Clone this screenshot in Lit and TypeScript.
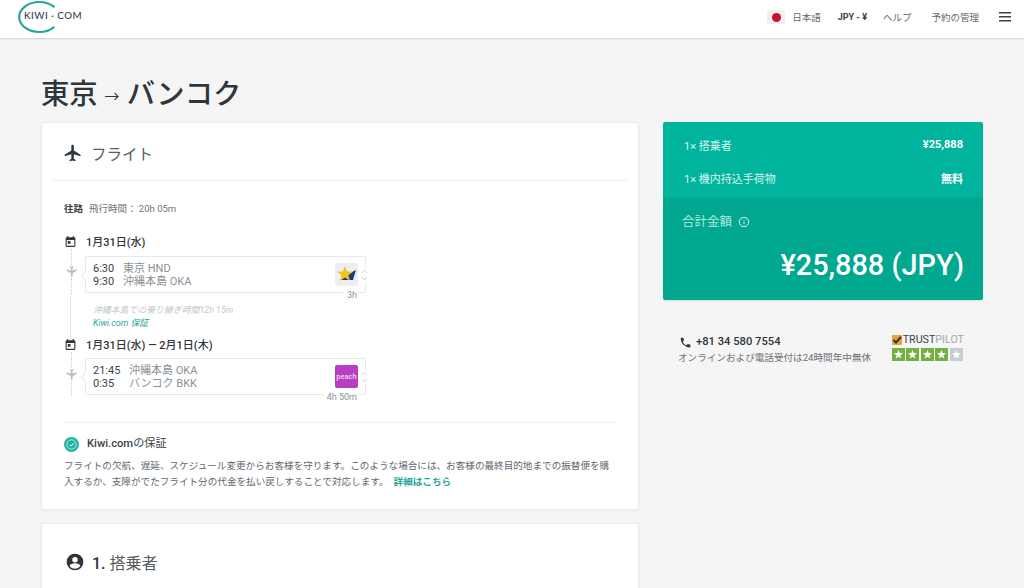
import { LitElement, html, css, svg } from "lit";
import { customElement } from "lit/decorators.js";

const plane = "M21 16v-2l-8-5V3.5c0-.83-.67-1.5-1.5-1.5S10 2.67 10 3.5V9l-8 5v2l8-2.5V19l-2 1.5V22l3.5-1 3.5 1v-1.5L13 19v-5.5l8 2.5z";
const cal = "M19 4h-1V2h-2v2H8V2H6v2H5a2 2 0 0 0-2 2v14a2 2 0 0 0 2 2h14a2 2 0 0 0 2-2V6a2 2 0 0 0-2-2zm0 16H5V9h14v11zM7 11h5v5H7z";

const starPath = "M6.5 2l1.2 3.1 3.3.2-2.6 2.1.9 3.2-2.8-1.8-2.8 1.8.9-3.2L2 5.3l3.3-.2z";

@customElement("app-root")
export class AppRoot extends LitElement {
  static styles = css`
    :host { display: block; width: 1024px; height: 588px; overflow: hidden; background: #f5f5f5; color: #2e353b;
      font-family: Roboto, "Noto Sans CJK JP", sans-serif; }
    * { box-sizing: border-box; }
    svg { display: block; flex: none; }
    header { height: 38px; background: #fff; box-shadow: 0 1px 2px rgba(0,0,0,.14); display: flex; align-items: center; padding: 0 13px 4px 18px; }
    .logo { position: relative; width: 65px; height: 34px; }
    .logo-text { position: absolute; left: 6px; top: 8px; font: 500 9.8px/14px Lato, sans-serif; letter-spacing: .5px; white-space: nowrap; color: #3b4349; }
    nav { margin-left: auto; display: flex; align-items: center; font-size: 9.5px; color: #5f676d; }
    .flag { width: 18px; height: 14px; background: #f5eef0; display: flex; align-items: center; justify-content: center; margin-right: 7px; }
    .flag i { width: 9px; height: 9px; border-radius: 50%; background: #c8102e; display: block; }
    .cur { font-weight: 700; color: #3b4349; margin-left: 17px; font-size: 9px; }
    .help { margin-left: 16px; }
    .manage { margin-left: 20px; }
    .menu { margin-left: 20px; }
    main { padding: 0 41px; }
    h1 { margin: 0; height: 84px; padding-top: 29px; font-size: 28.3px; line-height: 34px; font-weight: 500; color: #2e353b; display: flex; align-items: center; white-space: nowrap; }
    h1 span { font-size: 15px; font-weight: 400; margin: 4px 7px 0 7px; }
    .grid { display: grid; grid-template-columns: 598px 320px; column-gap: 24px; align-items: start; }
    .card { background: #fff; border: 1px solid #ebeced; border-radius: 2px; box-shadow: 0 1px 2px rgba(0,0,0,.04); }
    .flights { height: 388px; padding: 0 11px; }
    .head { height: 58px; border-bottom: 1px solid #ebeced; display: flex; align-items: center; gap: 8px; padding: 2px 0 0 10px; font-size: 15.5px; color: #555c62; }
    .body { padding: 0 11px; }
    .outbound { margin-top: 21px; font-size: 9.5px; line-height: 14px; color: #6c7378; display: flex; gap: 6px; }
    .outbound b { color: #3b4349; font-weight: 700; }
    .day { display: flex; align-items: center; gap: 9px; height: 16px; font-size: 11px; font-weight: 500; color: #2e353b; }
    .first { margin-top: 17px; }
    .second { margin-top: -3px; }
    .seg { display: flex; height: 45px; }
    .seg.after { height: 44px; }
    .rail { width: 21px; flex: none; display: flex; flex-direction: column; align-items: flex-start; padding-left: 1px; }
    .dots { width: 0; margin-left: 6px; border-left: 1px dotted #c9ced2; flex: 1; }
    .box { position: relative; width: 281px; height: 37px; margin-top: 7px; border: 1px solid #e6e8ea; border-radius: 2px; background: #fff; padding: 5px 0 0 7px; font-size: 11px; line-height: 13px; color: #8b9197; }
    .after .box { margin-top: 6px; }
    .box::before { content: ""; position: absolute; left: -4px; top: 15px; width: 6px; height: 6px; background: #fff; border-left: 1px solid #e6e8ea; border-bottom: 1px solid #e6e8ea; transform: rotate(45deg); }
    .line { display: flex; white-space: nowrap; }
    .line b { font-weight: 400; color: #3b4349; }
    .t1 b { width: 30px; } .t2 b { width: 36px; }
    .carrier { position: absolute; right: 7px; top: 6px; width: 23px; height: 23px; border-radius: 2px; overflow: hidden; }
    .peach { background: #b73ec0; color: #f3d3f0; font: 500 7.5px/23px Roboto, sans-serif; text-align: center; }
    .chev { position: absolute; right: -3px; top: 11px; background: #fff; }
    .dur { position: absolute; right: 8px; top: 32px; font-size: 9px; line-height: 12px; color: #8b9197; white-space: nowrap; background: #fff; padding: 0 0 0 3px; }
    .gap { display: flex; height: 45px; }
    .gap-text { padding: 10px 0 0 29px; font-size: 8.9px; line-height: 13px; font-style: italic; white-space: nowrap; color: #c3c7cb; }
    .gap-text div + div { color: #25a899; }
    .gap .rail { width: 0; padding: 0; overflow: visible; }
    .sep { height: 1px; background: #ebeced; margin-top: 26px; }
    .g-head { display: flex; align-items: center; gap: 8px; margin-top: 13px; font-size: 11.2px; line-height: 16px; color: #3b4349; font-weight: 500; }
    .g-head span { font-weight: 400; }
    .g-text { margin: 6px 0 0; font-size: 9.6px; line-height: 16px; color: #5f676d; }
    .g-text a { color: #25a899; font-weight: 700; margin-left: 5px; }
    .pax { margin-top: 13px; width: 598px; height: 100px; padding: 0 0 0 23px; display: flex; align-items: center; align-self: start; gap: 7px; font-size: 16px; color: #555c62; }
    .pax svg, .pax div { margin-top: -22px; }
    .pax b { color: #2e353b; font-weight: 500; }
    .left { display: flex; flex-direction: column; }
    .price { border-radius: 2px; overflow: hidden; color: #fff; height: 178px; display: flex; flex-direction: column; box-shadow: 0 1px 2px rgba(0,0,0,.1); }
    .top { height: 75px; background: #00b49d; padding: 6px 20px 0 21px; }
    .row { display: flex; justify-content: space-between; align-items: center; height: 33px; font-size: 11px; color: #d9f5f0; }
    .row b { color: #fff; font-weight: 700; font-size: 11px; }
    .bottom { flex: 1; background: #00a88f; padding: 17px 19px 0 19px; }
    .total { display: flex; align-items: center; gap: 6px; font-size: 12.5px; line-height: 16px; color: #b5e7de; }
    .amount { margin-top: 17px; text-align: right; font-size: 28.9px; line-height: 36px; font-weight: 500; white-space: nowrap; }
    .contact { display: flex; justify-content: space-between; margin-top: 34px; padding: 0 19px 0 15px; }
    .phone { display: flex; align-items: center; gap: 4px; font-size: 11.2px; line-height: 16px; font-weight: 500; color: #2e353b; margin-left: 1px; }
    .note { font-size: 9.6px; line-height: 14px; color: #6c7378; margin-top: 1px; }
    .tp-word { display: flex; align-items: center; gap: 1px; font: 400 10.7px/13px Roboto, sans-serif; color: #3b4349; margin-top: -1px; }
    .tp-word span { color: #a6abaf; }
    .stars { display: flex; gap: 1.5px; margin-top: 2px; }
    .star { width: 13px; height: 13px; background: #73b143; }
    .star.off { background: #c9cccf; }
  `;

  private seg(t1: string, p1: string, t2: string, p2: string, cls: string, logo: unknown, dur: string, after = "") {
    return html`<div class="seg ${after}">
      <div class="rail">
        <div class="dots"></div>
        <svg width="13" height="13" viewBox="0 0 24 24" fill="#b4bbc1" style="transform:rotate(180deg)"><path d="${plane}"></path></svg>
        <div class="dots"></div>
      </div>
      <div class="box ${cls}">
        <div class="line"><b>${t1}</b><span>${p1}</span></div>
        <div class="line"><b>${t2}</b><span>${p2}</span></div>
        ${logo}
        <svg class="chev" width="7" height="14" viewBox="0 0 7 14" fill="none" stroke="#cfd3d6" stroke-width="1"><path d="M1 5l2.5-3L6 5M1 9l2.5 3L6 9"></path></svg>
        <div class="dur">${dur}</div>
      </div>
    </div>`;
  }

  render() {
    const sky = html`<div class="carrier" style="background:#eceef0"><svg width="23" height="23" viewBox="0 0 23 23">
      <path d="M9 13L21 7l-3 10H5z" fill="#1d3b83"></path>
      <path d="M10 3l2 5.5 6 .2-4.7 3.6 1.7 5.7-5-3.4-5 3.4 1.7-5.7L2 8.700l6-.2z" fill="#f1c31d"></path></svg></div>`;
    const peach = html`<div class="carrier peach">peach</div>`;
    const calIcon = html`<svg width="13" height="13" viewBox="0 0 24 24" fill="#2e353b"><path d="${cal}"></path></svg>`;
    return html`
      <header>
        <div class="logo">
          <svg width="40" height="34" viewBox="0 0 40 34" fill="none"><path d="M35.700 6.700A20 15 0 1 0 35.700 27.300" stroke="#25a899" stroke-width="2.200" stroke-linecap="round"></path></svg>
          <div class="logo-text">KIWI · COM</div>
        </div>
        <nav>
          <div class="flag"><i></i></div>
          <span>日本語</span>
          <span class="cur">JPY - ¥</span>
          <span class="help">ヘルプ</span>
          <span class="manage">予約の管理</span>
          <svg class="menu" width="12" height="10" viewBox="0 0 12 10" fill="#3b4349"><path d="M0 0h12v1.500H0zM0 4h12v1.500H0zM0 8h12v1.500H0z"></path></svg>
        </nav>
      </header>
      <main>
        <h1>東京<span>→</span>バンコク</h1>
        <div class="grid">
          <div class="left">
            <section class="card flights">
              <div class="head">
                <svg width="20" height="20" viewBox="0 0 24 24" fill="#2e353b"><path d="${plane}"></path></svg>
                フライト
              </div>
              <div class="body">
                <div class="outbound"><b>往路</b><span>飛行時間： 20h 05m</span></div>
                <div class="day first">${calIcon}<span>1月31日(水)</span></div>
                ${this.seg("6:30", "東京 HND", "9:30", "沖縄本島 OKA", "t1", sky, "3h")}
                <div class="gap">
                  <div class="rail"><div class="dots"></div></div>
                  <div class="gap-text"><div>沖縄本島での乗り継ぎ時間12h 15m</div><div>Kiwi.com 保証</div></div>
                </div>
                <div class="day second">${calIcon}<span>1月31日(水) — 2月1日(木)</span></div>
                ${this.seg("21:45", "沖縄本島 OKA", "0:35", "バンコク BKK", "t2", peach, "4h 50m", "after")}
                <div class="sep"></div>
                <div class="g-head">
                  <svg width="15" height="15" viewBox="0 0 15 15"><circle cx="7.500" cy="7.500" r="7.500" fill="#22b3a0"></circle><circle cx="7.500" cy="7.500" r="4.700" fill="none" stroke="#d8f3ee" stroke-width=".8"></circle><path d="M5.500 7.600l1.500 1.500 2.600-2.800" fill="none" stroke="#fff" stroke-width="1"></path></svg>
                  <div>Kiwi.com<span>の保証</span></div>
                </div>
                <p class="g-text">フライトの欠航、遅延、スケジュール変更からお客様を守ります。このような場合には、お客様の最終目的地までの振替便を購入するか、支障がでたフライト分の代金を払い戻しすることで対応します。<a>詳細はこちら</a></p>
              </div>
            </section>
            <section class="card pax">
              <svg width="20" height="20" viewBox="0 0 24 24" fill="#2e353b"><path d="M12 2a10 10 0 1 0 0 20 10 10 0 0 0 0-20zm0 4a3.300 3.300 0 1 1 0 6.600A3.300 3.300 0 0 1 12 6zm0 14c-2.700 0-5-1.300-6.400-3.300C5.700 14.700 9.700 13.600 12 13.600s6.300 1.100 6.400 3.100A7.800 7.800 0 0 1 12 20z"></path></svg>
              <div><b>1.</b> 搭乗者</div>
            </section>
          </div>
          <aside>
            <div class="price">
              <div class="top">
                <div class="row"><span>1× 搭乗者</span><b>¥25,888</b></div>
                <div class="row"><span>1× 機内持込手荷物</span><b>無料</b></div>
              </div>
              <div class="bottom">
                <div class="total">合計金額
                  <svg width="12" height="12" viewBox="0 0 12 12" fill="none" stroke="#d9f5f0"><circle cx="6" cy="6" r="4.700"></circle><path d="M6 5.500v3M6 3.500v1"></path></svg>
                </div>
                <div class="amount">¥25,888 (JPY)</div>
              </div>
            </div>
            <div class="contact">
              <div>
                <div class="phone">
                  <svg width="13" height="13" viewBox="0 0 24 24" fill="#2e353b"><path d="M6.600 10.800a15 15 0 0 0 6.600 6.600l2.200-2.200a1 1 0 0 1 1-.25 11.400 11.400 0 0 0 3.600.57 1 1 0 0 1 1 1V20a1 1 0 0 1-1 1A17 17 0 0 1 3 4a1 1 0 0 1 1-1h3.500a1 1 0 0 1 1 1c0 1.250.2 2.450.57 3.600a1 1 0 0 1-.25 1z"></path></svg>
                  +81 34 580 7554
                </div>
                <div class="note">オンラインおよび電話受付は24時間年中無休</div>
              </div>
              <div>
                <div class="tp-word">
                  <svg width="10" height="10" viewBox="0 0 10 10"><rect width="10" height="10" rx="1" fill="#e8a33a"></rect><path d="M1.500 5l2.500 2.500L9 2" fill="none" stroke="#2e353b" stroke-width="2"></path></svg>
                  <div>TRUST<span>PILOT</span></div>
                </div>
                <div class="stars">
                  ${[0, 1, 2, 3, 4].map(
                    (i) => html`<div class="star ${i === 4 ? "off" : ""}"><svg width="13" height="13" viewBox="0 0 13 13">${svg`<path d="${starPath}" fill="#fff"></path>`}</svg></div>`
                  )}
                </div>
              </div>
            </div>
          </aside>
        </div>
      </main>
    `;
  }
}
